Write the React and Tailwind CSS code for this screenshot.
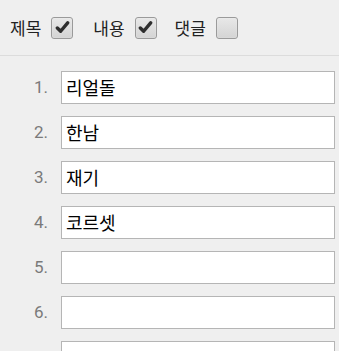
const items = ['리얼돌', '한남', '재기', '코르셋', '', '', ''];

function Check({ checked }) {
    return (
        <span className="w-[22px] h-[22px] rounded-[3px] border border-[#9a9a9a] bg-gradient-to-b from-[#e8e8e8] to-[#d4d4d4] shadow-[inset_0_0_1px_#fff] flex items-center justify-center">
            {checked && (
                <svg className="w-[15px] h-[15px]" viewBox="0 0 16 16">
                    <path d="M2.5 8.5 L6 12 L13.5 3" fill="none" stroke="#2e2e2e" strokeWidth="3.6" strokeLinecap="round" strokeLinejoin="round" />
                </svg>
            )}
        </span>
    );
}

export default function App() {
    return (
        <div className="w-[339px] h-[351px] overflow-hidden bg-[#efefef] font-['Noto_Sans_CJK_KR',sans-serif]">
            <div className="h-[56px] flex items-center pl-[10px] border-b border-[#dcdcdc] text-[17px] text-[#222]">
                <span>제목</span>
                <span className="ml-[10px]"><Check checked /></span>
                <span className="ml-[20px]">내용</span>
                <span className="ml-[10px]"><Check checked /></span>
                <span className="ml-[18px]">댓글</span>
                <span className="ml-[10px]"><Check /></span>
            </div>
            <div className="pt-[15px] flex flex-col gap-[12px]">
                {items.map((item, i) => (
                    <div key={i} className="flex items-center">
                        <span className="w-[48px] text-right text-[17px] text-[#7a7a7a] font-['Roboto',sans-serif]">{i < 6 ? `${i + 1}.` : ''}</span>
                        <div className="ml-[13px] w-[274px] h-[33px] bg-white border border-[#b5b5b5] flex items-center pl-[4px] text-[18px] text-black">
                            {item}
                        </div>
                    </div>
                ))}
            </div>
        </div>
    );
}
